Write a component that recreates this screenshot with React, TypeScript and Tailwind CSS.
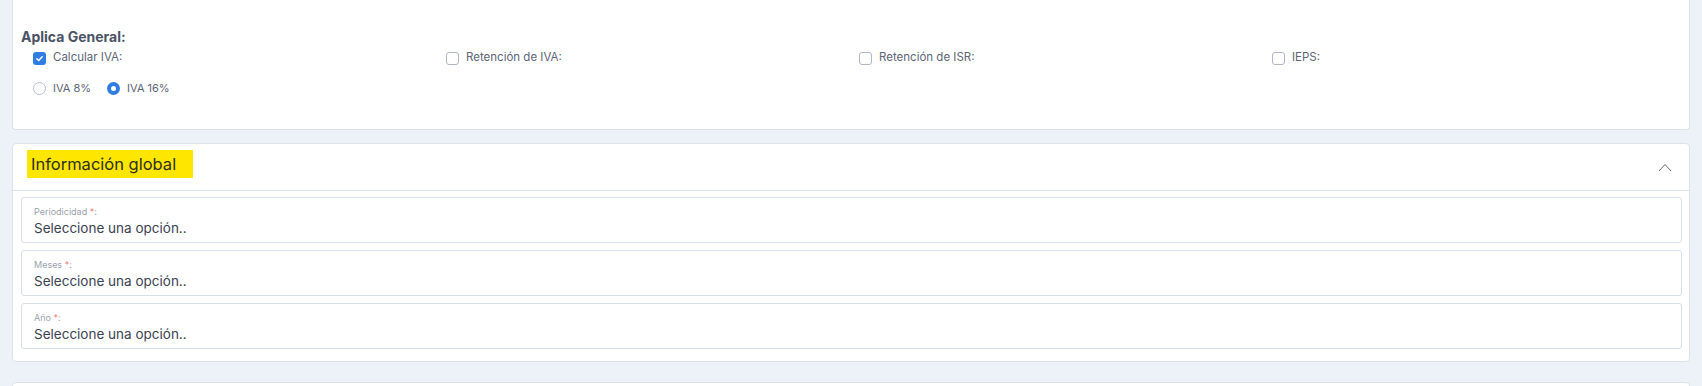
import React from 'react';

const font = { fontFamily: 'Inter, "Noto Sans", sans-serif' };

const Check: React.FC<{ checked?: boolean; label: string }> = ({ checked, label }) => (
  <label className="flex items-center gap-[7px] pl-3 h-5">
    {checked ? (
      <span className="w-[13px] h-[13px] rounded-[3px] bg-[#2f7de1] flex items-center justify-center">
        <svg width="9" height="9" viewBox="0 0 10 10" fill="none">
          <path d="M2 5.2 4.1 7.2 8 3" stroke="white" strokeWidth="1.6" strokeLinecap="round" strokeLinejoin="round" />
        </svg>
      </span>
    ) : (
      <span className="w-[13px] h-[13px] rounded-[3px] border border-[#aeb7c6] bg-white" />
    )}
    <span className="text-[11.5px] text-[#5d6577]">{label}</span>
  </label>
);

const Radio: React.FC<{ checked?: boolean; label: string }> = ({ checked, label }) => (
  <label className="flex items-center gap-[7px] h-5">
    {checked ? (
      <span className="w-[13px] h-[13px] rounded-full bg-[#2f7de1] flex items-center justify-center">
        <span className="w-[5px] h-[5px] rounded-full bg-white" />
      </span>
    ) : (
      <span className="w-[13px] h-[13px] rounded-full border border-[#b8c0cc] bg-white" />
    )}
    <span className="text-[11px] text-[#5d6577]">{label}</span>
  </label>
);

const SelectField: React.FC<{ label: string }> = ({ label }) => (
  <div className="h-[46px] border border-[#d6dfea] rounded-[3px] bg-white px-3 pt-[8px]">
    <div className="text-[9px] leading-[12px] text-[#9aa1ad]">
      {label} <span className="text-[#f07b7b]">*</span>:
    </div>
    <div className="text-[13.5px] leading-[18px] text-[#3b4252] mt-[1px]">Seleccione una opción..</div>
  </div>
);

export default function App() {
  return (
    <div className="min-h-[386px] bg-[#edf1f8] px-3" style={font}>
      <div className="bg-white border border-t-0 border-[#dde2e8] rounded-b-[4px] px-2 pt-[27px] pb-[31px]">
        <div className="text-[14px] leading-5 font-bold text-[#4a5366]">Aplica General:</div>
        <div className="grid grid-cols-[repeat(4,413px)] mt-[1px]">
          <Check checked label="Calcular IVA:" />
          <Check label="Retención de IVA:" />
          <Check label="Retención de ISR:" />
          <Check label="IEPS:" />
        </div>
        <div className="flex items-center gap-4 pl-3 mt-[10px]">
          <Radio label="IVA 8%" />
          <Radio checked label="IVA 16%" />
        </div>
      </div>

      <div className="mt-[13px] bg-white border border-[#dde2e8] rounded-[4px]">
        <div className="h-[47px] flex items-start justify-between pl-[14px] pr-[17px] pt-[6px] border-b border-[#dde2e8]">
          <div className="h-[28px] w-[166px] bg-[#ffe600] px-1 flex items-center text-[16.5px] text-[#2e2e1c]">
            Información global
          </div>
          <svg width="14" height="9" viewBox="0 0 14 9" fill="none" className="mt-[13px]">
            <path d="M1 8 7 1.5 13 8" stroke="#5f6b80" strokeWidth="1" />
          </svg>
        </div>
        <div className="flex flex-col gap-[7px] pl-2 pr-[7px] pt-[6px] pb-[12px]">
          <SelectField label="Periodicidad" />
          <SelectField label="Meses" />
          <SelectField label="Año" />
        </div>
      </div>

      <div className="mt-[20px] h-[40px] bg-white border border-[#dde2e8] rounded-t-[4px]" />
    </div>
  );
}
